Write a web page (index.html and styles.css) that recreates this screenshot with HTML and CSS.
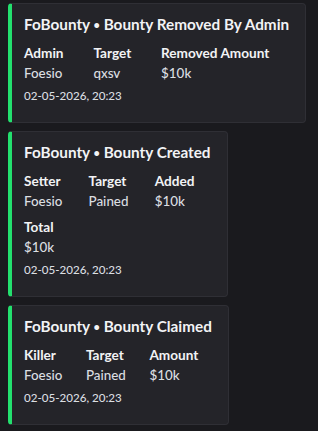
FILE: index.html
```html
<!DOCTYPE html>
<html lang="en">
<head>
<meta charset="utf-8">
<title>FoBounty log</title>
<link rel="stylesheet" href="styles.css">
</head>
<body>
<main class="feed">
  <article class="embed">
    <h2 class="embed-title">FoBounty <span class="sep">•</span> Bounty Removed By Admin</h2>
    <div class="fields">
      <div class="field"><div class="field-name">Admin</div><div class="field-value">Foesio</div></div>
      <div class="field"><div class="field-name">Target</div><div class="field-value">qxsv</div></div>
      <div class="field"><div class="field-name">Removed Amount</div><div class="field-value">$10k</div></div>
    </div>
    <div class="embed-footer">02-05-2026, 20:23</div>
  </article>

  <article class="embed">
    <h2 class="embed-title">FoBounty <span class="sep">•</span> Bounty Created</h2>
    <div class="fields">
      <div class="field"><div class="field-name">Setter</div><div class="field-value">Foesio</div></div>
      <div class="field"><div class="field-name">Target</div><div class="field-value">Pained</div></div>
      <div class="field"><div class="field-name">Added</div><div class="field-value">$10k</div></div>
      <div class="field field-full"><div class="field-name">Total</div><div class="field-value">$10k</div></div>
    </div>
    <div class="embed-footer">02-05-2026, 20:23</div>
  </article>

  <article class="embed">
    <h2 class="embed-title">FoBounty <span class="sep">•</span> Bounty Claimed</h2>
    <div class="fields">
      <div class="field"><div class="field-name">Killer</div><div class="field-value">Foesio</div></div>
      <div class="field"><div class="field-name">Target</div><div class="field-value">Pained</div></div>
      <div class="field"><div class="field-name">Amount</div><div class="field-value">$10k</div></div>
    </div>
    <div class="embed-footer">02-05-2026, 20:23</div>
  </article>
</main>
</body>
</html>
```
FILE: styles.css
```css
html, body {
  background: #1a1a1e;
}
body {
  margin: 3px 8px;
  font-family: Lato, "Liberation Sans", sans-serif;
  color: #dbdee1;
}
.feed {
  display: flex;
  flex-direction: column;
  align-items: flex-start;
  gap: 8px;
}
.embed {
  box-sizing: border-box;
  width: fit-content;
  background: #242429;
  border: 1px solid #2f2f35;
  border-left: 4px solid #23e06e;
  border-radius: 4px;
  padding: 10px 16px 18px 12px;
  display: flex;
  flex-direction: column;
}
.embed-title {
  margin: 0;
  font-size: 15.3px;
  line-height: 20px;
  font-weight: 700;
  color: #f2f3f5;
  white-space: nowrap;
}
.sep {
  font-size: 0.72em;
  line-height: 1;
  vertical-align: 0.12em;
}
.fields {
  margin-top: 9px;
  display: grid;
  grid-template-columns: auto auto auto;
  column-gap: 10px;
  row-gap: 6px;
}
.field-full {
  grid-column: 1 / -1;
}
.field-name {
  font-size: 13.6px;
  line-height: 20px;
  font-weight: 700;
  color: #f2f3f5;
  white-space: nowrap;
}
.field-value {
  font-size: 13.4px;
  line-height: 20px;
  font-weight: 500;
  color: #dbdee1;
  white-space: nowrap;
}
.embed-footer {
  margin-top: 5px;
  font-size: 11.6px;
  line-height: 16px;
  font-weight: 500;
  color: #dbdee1;
}
```
